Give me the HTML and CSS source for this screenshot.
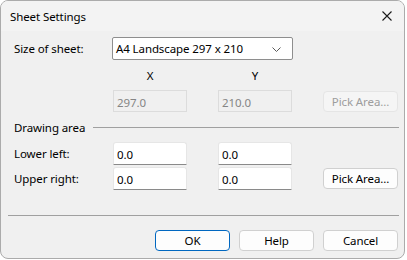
FILE: index.html
```html
<!DOCTYPE html>
<html lang="en">
<head>
    <meta charset="UTF-8">
    <title>Sheet Settings</title>
    <link rel="stylesheet" href="styles.css">
</head>
<body>
    <div class="window">
        <div class="titlebar">
            <span class="title">Sheet Settings</span>
            <svg class="close" width="10" height="10" viewBox="0 0 10 10">
                <path d="M0.5 0.5 L9.5 9.5 M9.5 0.5 L0.5 9.5" stroke="#1a1a1a" stroke-width="1.1" fill="none"/>
            </svg>
        </div>
        <div class="content">
            <div class="form">
                <span class="label">Size of sheet:</span>
                <div class="combo">
                    <span>A4 Landscape 297 x 210</span>
                    <svg class="chevron" width="9" height="5" viewBox="0 0 9 5">
                        <path d="M0.5 0.5 L4.5 4.5 L8.5 0.5" stroke="#5a5a5a" stroke-width="1" fill="none"/>
                    </svg>
                </div>

                <span class="axis col-x">X</span>
                <span class="axis col-y">Y</span>

                <input class="field col-x" type="text" value="297.0" disabled>
                <input class="field col-y" type="text" value="210.0" disabled>
                <button class="btn col-btn" disabled>Pick Area...</button>

                <div class="group">Drawing area</div>

                <span class="label">Lower left:</span>
                <input class="field col-x" type="text" value="0.0">
                <input class="field col-y" type="text" value="0.0">

                <span class="label">Upper right:</span>
                <input class="field col-x" type="text" value="0.0">
                <input class="field col-y" type="text" value="0.0">
                <button class="btn col-btn">Pick Area...</button>
            </div>

            <div class="separator"></div>

            <div class="actions">
                <button class="btn default">OK</button>
                <button class="btn">Help</button>
                <button class="btn">Cancel</button>
            </div>
        </div>
    </div>
</body>
</html>
```

FILE: styles.css
```css
body {
    margin: 0;
    background-color: #ffffff;
    font-family: "Noto Sans", "Open Sans", sans-serif;
    font-size: 11.5px;
    letter-spacing: -0.1px;
    color: #000;
}

.window {
    width: 405px;
    height: 259px;
    box-sizing: border-box;
    border: 1px solid #ababab;
    border-radius: 8px;
    background-color: #f0f0f0;
    overflow: hidden;
}

.titlebar {
    height: 30px;
    display: flex;
    align-items: center;
    justify-content: space-between;
    padding: 0 12px 0 9px;
    background-color: #f3f3f3;
}

.close {
    margin-top: -1px;
}

.content {
    padding: 6px 6px 0 13px;
}

.form {
    display: grid;
    grid-template-columns: 68px 74px 74px 75px;
    grid-template-rows: 23px 30px 22px 30px 25px 23px;
    column-gap: 31px;
}

.label {
    grid-column: 1;
    height: 23px;
    line-height: 23px;
    white-space: nowrap;
}

.col-x {
    grid-column: 2;
}

.col-y {
    grid-column: 3;
}

.col-btn {
    grid-column: 4;
    align-self: center;
}

.combo {
    grid-column: 2 / 4;
    margin: 0 -1px;
    display: flex;
    align-items: center;
    justify-content: space-between;
    padding: 0 11px 0 3px;
    background-color: #fff;
    border: 1px solid #8e8e8e;
    border-radius: 2px;
    white-space: nowrap;
}

.chevron {
    margin-top: 1px;
}

.axis {
    align-self: center;
    text-align: center;
}

.field {
    box-sizing: border-box;
    width: 74px;
    height: 23px;
    margin: 0;
    padding: 2px 3px 0;
    align-self: start;
    font-family: inherit;
    font-size: inherit;
    letter-spacing: inherit;
    line-height: 16px;
    color: #000;
    background-color: #fff;
    border: 1px solid #e6e6e6;
    border-bottom-color: #8a8a8a;
    border-radius: 3px 3px 0 0;
    outline: none;
}

.field:disabled {
    height: 22px;
    color: #858585;
    background-color: #f0f0f0;
    border: 1px solid #dcdcdc;
    border-radius: 0;
}

.btn {
    box-sizing: border-box;
    width: 75px;
    height: 21px;
    padding: 0;
    font-family: inherit;
    font-size: inherit;
    letter-spacing: inherit;
    color: #000;
    background-color: #fdfdfd;
    border: 1px solid #d0d0d0;
    border-radius: 4px;
}

.btn:disabled {
    color: #9d9d9d;
    background-color: #f5f5f5;
    border-color: #e5e5e5;
}

.btn.default {
    border-color: #0067c0;
}

.group {
    grid-column: 1 / -1;
    display: flex;
    align-items: center;
    gap: 8px;
}

.group::after {
    content: "";
    flex: 1;
    height: 1px;
    margin-right: -1px;
    background-color: #a0a0a0;
}

.separator {
    height: 1px;
    margin: 25px -1px 0 -6px;
    background-color: #a0a0a0;
}

.actions {
    display: flex;
    justify-content: flex-end;
    gap: 9px;
    margin-top: 14px;
}
```
